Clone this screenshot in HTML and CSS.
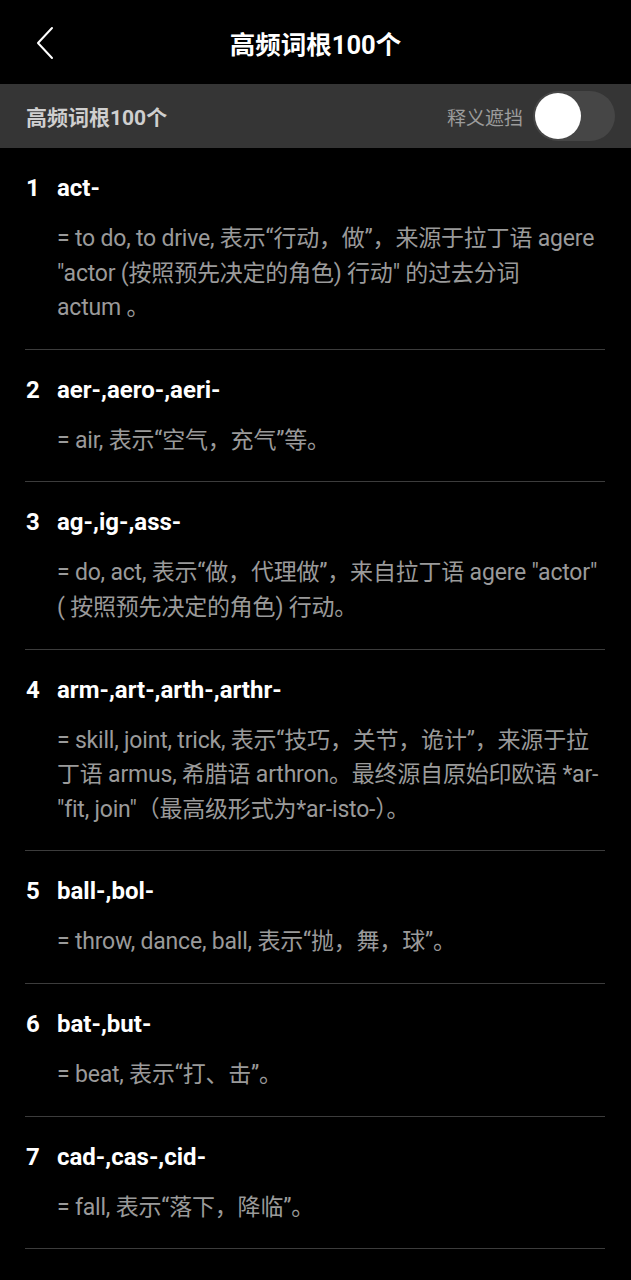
FILE: index.html
```html
<!DOCTYPE html>
<html lang="zh-CN">
<head>
<meta charset="utf-8">
<link rel="stylesheet" href="styles.css">
</head>
<body>
<header class="topbar">
  <svg class="back" width="24" height="36" viewBox="0 0 24 36"><path d="M18 3 L4 18 L18 33" fill="none" stroke="#fff" stroke-width="2" stroke-linecap="round" stroke-linejoin="round"/></svg>
  <h1 class="title">高频词根100个</h1>
</header>
<div class="subbar">
  <span class="subtitle">高频词根100个</span>
  <div class="mask">
    <span class="mask-label">释义遮挡</span>
    <span class="switch"><span class="knob"></span></span>
  </div>
</div>
<ul class="list">
  <li class="item">
    <div class="head"><span class="num">1</span><span class="root">act-</span></div>
    <p class="desc">= to do, to drive, 表示“行动，做”，来源于拉丁语 agere "actor (按照预先决定的角色) 行动" 的过去分词 actum&nbsp;。</p>
  </li>
  <li class="item">
    <div class="head"><span class="num">2</span><span class="root">aer-,aero-,aeri-</span></div>
    <p class="desc">= air, 表示“空气，充气”等。</p>
  </li>
  <li class="item">
    <div class="head"><span class="num">3</span><span class="root">ag-,ig-,ass-</span></div>
    <p class="desc">= do, act, 表示“做，代理做”，来自拉丁语 agere "actor" ( 按照预先决定的角色) 行动。</p>
  </li>
  <li class="item">
    <div class="head"><span class="num">4</span><span class="root">arm-,art-,arth-,arthr-</span></div>
    <p class="desc">= skill, joint, trick, 表示“技巧，关节，诡计”，来源于拉丁语 armus, 希腊语 arthron。最终源自原始印欧语 *ar- "fit, join"（最高级形式为*ar-isto-）。</p>
  </li>
  <li class="item">
    <div class="head"><span class="num">5</span><span class="root">ball-,bol-</span></div>
    <p class="desc">= throw, dance, ball, 表示“抛，舞，球”。</p>
  </li>
  <li class="item">
    <div class="head"><span class="num">6</span><span class="root">bat-,but-</span></div>
    <p class="desc">= beat, 表示“打、击”。</p>
  </li>
  <li class="item">
    <div class="head"><span class="num">7</span><span class="root">cad-,cas-,cid-</span></div>
    <p class="desc">= fall, 表示“落下，降临”。</p>
  </li>
</ul>
</body>
</html>
```
FILE: styles.css
```css
* { box-sizing: border-box; }
html, body {
  margin: 0;
  padding: 0;
  background: #000;
  font-family: Roboto, "Noto Sans CJK SC", sans-serif;
  color: #fff;
}
.topbar {
  height: 84px;
  display: flex;
  align-items: center;
  justify-content: center;
  position: relative;
}
.back {
  position: absolute;
  left: 34px;
  top: 25px;
}
.title {
  margin: 0;
  font-size: 25.5px;
  font-weight: 700;
  letter-spacing: 0;
}
.subbar {
  height: 64px;
  background: #353535;
  display: flex;
  align-items: center;
  justify-content: space-between;
  padding: 0 16px 0 26px;
}
.subtitle {
  font-size: 21px;
  font-weight: 700;
  color: #cfcfcf;
}
.mask {
  display: flex;
  align-items: center;
  gap: 10px;
}
.mask-label {
  font-size: 19px;
  color: #9c9c9c;
}
.switch {
  width: 82px;
  height: 50px;
  border-radius: 25px;
  background: #464646;
  display: flex;
  align-items: center;
  padding: 0 2px;
}
.knob {
  width: 46px;
  height: 46px;
  border-radius: 50%;
  background: #fff;
}
.list {
  list-style: none;
  margin: 0;
  padding: 0 26px 0 25px;
}
.item {
  border-bottom: 1px solid #3c3c3c;
  padding: 25px 0 23px;
}
.head {
  display: flex;
  align-items: center;
  height: 30px;
  font-size: 24px;
  font-weight: 700;
}
.num {
  width: 32px;
  padding-left: 1px;
}
.desc {
  margin: 19px -2px 0 32px;
  font-size: 23px;
  line-height: 34.6px;
  letter-spacing: -0.2px;
  color: #9a9a9a;
}
```
